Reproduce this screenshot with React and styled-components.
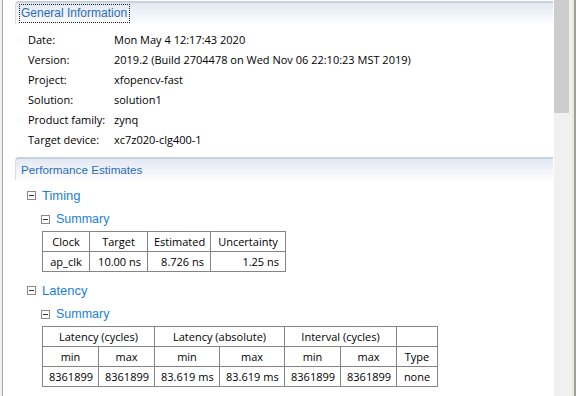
import React from 'react';
import styled, { createGlobalStyle } from 'styled-components';

const GlobalStyle = createGlobalStyle`
	html, body {
		margin: 0;
		padding: 0;
		background: #fff;
	}
	body {
		font-family: 'Open Sans', 'Liberation Sans', Arial, sans-serif;
		font-size: 11px;
		color: #000;
	}
`;

const Frame = styled.div`
	display: flex;
	width: 576px;
	height: 396px;
	overflow: hidden;
`;

const LeftEdge = styled.div`
	width: 2px;
	background: #f0f0f0;
	border-right: 1px solid #a9a9a9;
	flex-shrink: 0;
`;

const Content = styled.div`
	flex: 1;
	padding: 1px 1px 0 12px;
	overflow: hidden;
`;

const Scrollbar = styled.div`
	width: 18px;
	background: #f0f0f0;
	flex-shrink: 0;
`;

const Thumb = styled.div`
	width: 15px;
	height: 113px;
	background: #cdcdcd;
`;

const RightEdge = styled.div`
	width: 4px;
	flex-shrink: 0;
	background: linear-gradient(to right, #ece9d8 0 2px, #a0a0a0 2px 4px);
`;

const SectionHeader = styled.div`
	height: 21px;
	display: flex;
	align-items: center;
	padding-left: 6px;
	border-top: 2px solid #c6d2de;
	border-left: 1px solid #d4dde7;
	border-radius: 4px 0 0 0;
	background: linear-gradient(#e2e9f3, #fdfdfe);
	margin-top: ${(props) => props.gap || 0}px;
`;

const HeaderTitle = styled.span`
	font-family: 'Liberation Sans', Arial, sans-serif;
	color: #2a6cb9;
	font-size: ${(props) => props.size || 12}px;
	padding: 1px 2px 2px 1px;
	margin-left: -2px;
	outline: ${(props) => (props.focused ? '1px dotted #222' : 'none')};
`;

const InfoList = styled.div`
	display: grid;
	grid-template-columns: 86px 1fr;
	grid-auto-rows: 20px;
	align-items: center;
	padding: 5px 0 0 13px;
`;

const TreeRow = styled.div`
	display: flex;
	align-items: center;
	height: 20px;
	margin-top: ${(props) => props.gap || 0}px;
	padding-left: ${(props) => props.indent}px;
`;

const Toggle = styled.span`
	width: 7px;
	height: 7px;
	border: 1px solid #8a8a8a;
	position: relative;
	margin-right: 6px;
	flex-shrink: 0;

	&::after {
		content: '';
		position: absolute;
		left: 1px;
		right: 1px;
		top: 3px;
		height: 1px;
		background: #333;
	}
`;

const TreeLabel = styled.span`
	font-family: 'Liberation Sans', Arial, sans-serif;
	color: #1a7fdc;
	font-size: ${(props) => props.size || 13}px;
`;

const Table = styled.table`
	border-collapse: collapse;
	table-layout: fixed;
	width: ${(props) => props.width}px;
	margin: 2px 0 0 27px;
`;

const Col = styled.col`
	width: ${(props) => props.w}px;
`;

const Cell = styled.td`
	border: 1px solid #858585;
	height: 20px;
	padding: 0 6px 1px;
	text-align: ${(props) => props.align || 'center'};
	white-space: nowrap;
	box-sizing: border-box;
`;

const timing = {
	widths: [47, 58, 63, 75],
	head: ['Clock', 'Target', 'Estimated', 'Uncertainty'],
	row: [['ap_clk', 'center'], ['10.00 ns', 'right'], ['8.726 ns', 'right'], ['1.25 ns', 'right']],
};

const info = [
	['Date:', 'Mon May 4 12:17:43 2020'],
	['Version:', '2019.2 (Build 2704478 on Wed Nov 06 22:10:23 MST 2019)'],
	['Project:', 'xfopencv-fast'],
	['Solution:', 'solution1'],
	['Product family:', 'zynq'],
	['Target device:', 'xc7z020-clg400-1'],
];

const latencyWidths = [56, 56, 65, 65, 56, 56, 41];

export default function App() {
	return (
		<Frame>
			<GlobalStyle />
			<LeftEdge />
			<Content>
				<SectionHeader>
					<HeaderTitle focused>General Information</HeaderTitle>
				</SectionHeader>
				<InfoList>
					{info.map(([k, v]) => (
						<React.Fragment key={k}>
							<span>{k}</span>
							<span>{v}</span>
						</React.Fragment>
					))}
				</InfoList>

				<SectionHeader gap={8}>
					<HeaderTitle size={11.7}>Performance Estimates</HeaderTitle>
				</SectionHeader>

				<TreeRow indent={12} gap={5}>
					<Toggle />
					<TreeLabel>Timing</TreeLabel>
				</TreeRow>
				<TreeRow indent={26} gap={4}>
					<Toggle />
					<TreeLabel size={12.5}>Summary</TreeLabel>
				</TreeRow>
				<Table width={243}>
					<colgroup>
						{timing.widths.map((w, i) => (
							<Col key={i} w={w} />
						))}
					</colgroup>
					<tbody>
						<tr>
							{timing.head.map((t) => (
								<Cell key={t}>{t}</Cell>
							))}
						</tr>
						<tr>
							{timing.row.map(([t, a]) => (
								<Cell key={t} align={a}>{t}</Cell>
							))}
						</tr>
					</tbody>
				</Table>

				<TreeRow indent={12} gap={8}>
					<Toggle />
					<TreeLabel>Latency</TreeLabel>
				</TreeRow>
				<TreeRow indent={26} gap={4}>
					<Toggle />
					<TreeLabel size={12.5}>Summary</TreeLabel>
				</TreeRow>
				<Table width={395}>
					<colgroup>
						{latencyWidths.map((w, i) => (
							<Col key={i} w={w} />
						))}
					</colgroup>
					<tbody>
						<tr>
							<Cell colSpan={2}>Latency (cycles)</Cell>
							<Cell colSpan={2}>Latency (absolute)</Cell>
							<Cell colSpan={2}>Interval (cycles)</Cell>
							<Cell />
						</tr>
						<tr>
							{['min', 'max', 'min', 'max', 'min', 'max', 'Type'].map((t, i) => (
								<Cell key={i}>{t}</Cell>
							))}
						</tr>
						<tr>
							{['8361899', '8361899', '83.619 ms', '83.619 ms', '8361899', '8361899', 'none'].map((t, i) => (
								<Cell key={i}>{t}</Cell>
							))}
						</tr>
					</tbody>
				</Table>

				<TreeRow indent={26} gap={4}>
					<Toggle />
					<TreeLabel size={12.5}>Detail</TreeLabel>
				</TreeRow>
			</Content>
			<Scrollbar>
				<Thumb />
			</Scrollbar>
			<RightEdge />
		</Frame>
	);
}
